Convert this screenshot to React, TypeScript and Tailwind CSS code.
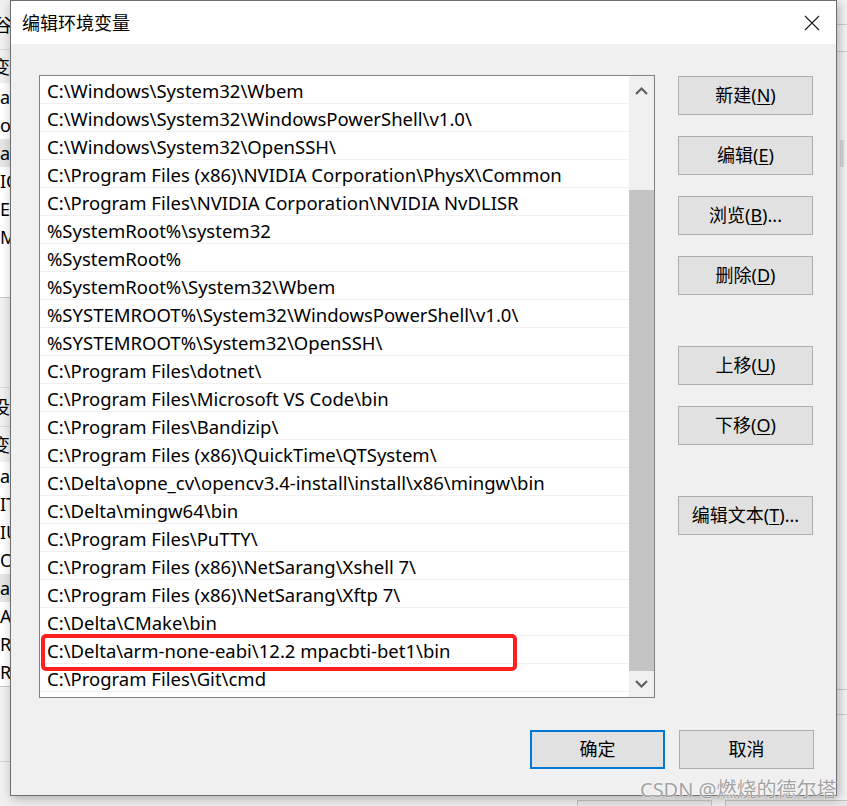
import React from "react";

const paths = [
  "C:\\Windows\\System32\\Wbem",
  "C:\\Windows\\System32\\WindowsPowerShell\\v1.0\\",
  "C:\\Windows\\System32\\OpenSSH\\",
  "C:\\Program Files (x86)\\NVIDIA Corporation\\PhysX\\Common",
  "C:\\Program Files\\NVIDIA Corporation\\NVIDIA NvDLISR",
  "%SystemRoot%\\system32",
  "%SystemRoot%",
  "%SystemRoot%\\System32\\Wbem",
  "%SYSTEMROOT%\\System32\\WindowsPowerShell\\v1.0\\",
  "%SYSTEMROOT%\\System32\\OpenSSH\\",
  "C:\\Program Files\\dotnet\\",
  "C:\\Program Files\\Microsoft VS Code\\bin",
  "C:\\Program Files\\Bandizip\\",
  "C:\\Program Files (x86)\\QuickTime\\QTSystem\\",
  "C:\\Delta\\opne_cv\\opencv3.4-install\\install\\x86\\mingw\\bin",
  "C:\\Delta\\mingw64\\bin",
  "C:\\Program Files\\PuTTY\\",
  "C:\\Program Files (x86)\\NetSarang\\Xshell 7\\",
  "C:\\Program Files (x86)\\NetSarang\\Xftp 7\\",
  "C:\\Delta\\CMake\\bin",
  "C:\\Delta\\arm-none-eabi\\12.2 mpacbti-bet1\\bin",
  "C:\\Program Files\\Git\\cmd",
];

// label, access key, trailing text, gap before
const sideButtons: { label: string; key: string; tail?: string; gap: string }[] = [
  { label: "新建", key: "N", gap: "mt-0" },
  { label: "编辑", key: "E", gap: "mt-[21px]" },
  { label: "浏览", key: "B", tail: "...", gap: "mt-[21px]" },
  { label: "删除", key: "D", gap: "mt-[21px]" },
  { label: "上移", key: "U", gap: "mt-[51px]" },
  { label: "下移", key: "O", gap: "mt-[21px]" },
  { label: "编辑文本", key: "T", tail: "...", gap: "mt-[51px]" },
];

const upperRows = [
  { t: "a", hl: false },
  { t: "on", hl: false },
  { t: "at", hl: true },
  { t: "IC", hl: false },
  { t: "El", hl: false },
  { t: "M", hl: false },
];

const lowerRows = [
  { t: "a", hl: false },
  { t: "IT", hl: false },
  { t: "IU", hl: false },
  { t: "OS", hl: false },
  { t: "at", hl: true },
  { t: "A", hl: false },
  { t: "R", hl: false },
  { t: "R", hl: false },
];

function WinButton({
  children,
  className = "",
  primary = false,
}: {
  children: React.ReactNode;
  className?: string;
  primary?: boolean;
}) {
  return (
    <div
      className={`flex h-[39px] w-[135px] items-center justify-center bg-[#e1e1e1] text-[18px] text-black ${
        primary ? "border-2 border-[#0078d7]" : "border border-[#adadad]"
      } ${className}`}
    >
      {children}
    </div>
  );
}

function Chevron({ up }: { up?: boolean }) {
  return (
    <svg width="13" height="8" viewBox="0 0 13 8">
      <path
        d={up ? "M1 7 L6.5 1.5 L12 7" : "M1 1 L6.5 6.5 L12 1"}
        fill="none"
        stroke="#606060"
        strokeWidth="2.2"
      />
    </svg>
  );
}

// The window behind the dialog, only its edges show.
function Backdrop() {
  return (
    <div className="flex h-full w-full">
      <div className="flex w-[10px] flex-col overflow-hidden bg-[#f0f0f0] text-[18px] leading-none text-black">
        <div className="flex h-[50px] items-center border-b border-[#d9d9d9]">
          <span className="-ml-[6px] whitespace-nowrap">谷</span>
        </div>
        <div className="flex h-[33px] items-center">
          <span className="-ml-[8px] whitespace-nowrap">变量</span>
        </div>
        <div className="h-[214px] bg-white">
          {upperRows.map((r, i) => (
            <div
              key={i}
              className={`flex h-[28px] items-center whitespace-nowrap ${r.hl ? "bg-[#e5e5e5]" : ""}`}
            >
              {r.t}
            </div>
          ))}
        </div>
        <div className="h-[90px] border-t border-[#c8c8c8]" />
        <div className="flex h-[40px] items-center border-t border-b border-[#d9d9d9]">
          <span className="-ml-[8px] whitespace-nowrap">没</span>
        </div>
        <div className="flex h-[35px] items-center">
          <span className="-ml-[8px] whitespace-nowrap">变量</span>
        </div>
        <div className="border-b border-[#c8c8c8] bg-white">
          {lowerRows.map((r, i) => (
            <div
              key={i}
              className={`flex h-[28px] items-center whitespace-nowrap ${r.hl ? "bg-[#e5e5e5]" : ""}`}
            >
              {r.t}
            </div>
          ))}
        </div>
        <div className="h-[75px] border-b border-[#d0d0d0]" />
      </div>
      <div className="flex-1" />
      <div className="flex w-[11px] flex-col bg-[#f4f4f4]">
        <div className="h-[25px] border-b border-[#cfcfcf]" />
        <div className="h-[27px] border-b border-[#cfcfcf]" />
        <div className="ml-[4px] mt-[88px] h-[27px] w-[4px] bg-[#dadada]" />
        <div className="mt-[498px] h-[25px] border-b border-[#cfcfcf]" />
        <div className="h-[25px] border-b border-[#cfcfcf]" />
      </div>
    </div>
  );
}

export default function App() {
  return (
    <div
      className="relative h-[806px] w-[847px] overflow-hidden bg-[#efefef]"
      style={{ fontFamily: '"Noto Sans", "Noto Sans CJK SC", sans-serif' }}
    >
      <Backdrop />

      {/* background buttons peeking out under the dialog */}
      <div className="absolute left-[577px] top-[800px] h-[20px] w-[135px] border border-[#c4c4c4] bg-[#e6e6e6]" />
      <div className="absolute left-[725px] top-[800px] h-[20px] w-[135px] border border-[#c4c4c4] bg-[#e6e6e6]" />

      {/* dialog window */}
      <div className="absolute left-[10px] top-0 flex h-[796px] w-[827px] flex-col border border-[#6f6f6f] bg-[#f0f0f0] shadow-[2px_2px_10px_rgba(0,0,0,0.3)]">
        <div className="flex h-[43px] items-center justify-between bg-white pl-[11px] pr-[16px]">
          <span className="pt-[1px] text-[18px] text-black">编辑环境变量</span>
          <svg width="16" height="16" viewBox="0 0 16 16">
            <path d="M1 1 L15 15 M15 1 L1 15" stroke="#1a1a1a" strokeWidth="1.1" />
          </svg>
        </div>

        <div className="flex flex-1 flex-col pl-[28px] pr-[22px] pt-[31px]">
          <div className="flex">
            {/* path list */}
            <div className="relative flex h-[623px] w-[616px] border border-[#828282] bg-white">
              <div className="flex-1">
                {paths.map((p) => (
                  <div
                    key={p}
                    className="flex h-[28px] items-center whitespace-nowrap border-b border-[#f0f0f0] pl-[7px] pt-[3px] text-[18.5px] text-black"
                  >
                    {p}
                  </div>
                ))}
              </div>
              <div className="flex w-[25px] flex-col bg-[#f0f0f0]">
                <div className="flex h-[26px] items-center justify-center pt-[4px]">
                  <Chevron up />
                </div>
                <div className="flex flex-1 flex-col justify-end">
                  <div className="h-[481px] bg-[#c4c4c4]" />
                </div>
                <div className="flex h-[26px] items-center justify-center">
                  <Chevron />
                </div>
              </div>

              {/* red highlight annotation */}
              <div className="absolute left-[1px] top-[558px] h-[37px] w-[476px] rounded-[5px] border-4 border-[#ff1f1f]" />
            </div>

            {/* side buttons */}
            <div className="ml-[23px] flex flex-col pt-[1px]">
              {sideButtons.map((b) => (
                <WinButton key={b.label + b.key} className={b.gap}>
                  {b.label}(<span className="underline underline-offset-2">{b.key}</span>){b.tail ?? ""}
                </WinButton>
              ))}
            </div>
          </div>

          <div className="mt-[32px] flex justify-end gap-[14px]">
            <WinButton primary>确定</WinButton>
            <WinButton>取消</WinButton>
          </div>
        </div>
      </div>

      {/* watermark */}
      <div
        className="absolute left-[640px] top-[775px] whitespace-nowrap text-[20px] text-[#a3a3a3]"
        style={{ textShadow: "0 0 2px #fff, 0 0 1px #fff" }}
      >
        CSDN @燃烧的德尔塔
      </div>
    </div>
  );
}
